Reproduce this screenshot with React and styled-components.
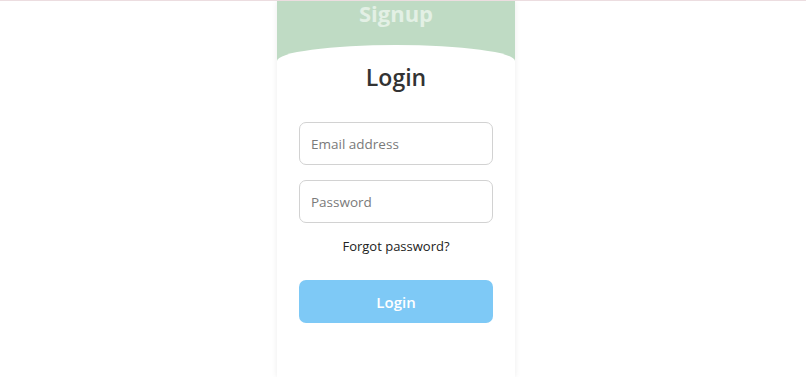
import React from 'react';
import styled, { createGlobalStyle } from 'styled-components';

const GlobalStyle = createGlobalStyle`
  html, body {
    margin: 0;
    padding: 0;
    height: 100%;
    background: #ffffff;
    font-family: "Open Sans", "Noto Sans", sans-serif;
  }
  #root {
    height: 100%;
  }
  * {
    box-sizing: border-box;
  }
`;

const Page = styled.div`
  height: 100vh;
  border-top: 1px solid #ecdde0;
  display: flex;
  justify-content: center;
  padding-right: 14px;
  overflow: hidden;
`;

const Card = styled.div`
  width: 238px;
  height: 100%;
  background-color: #bfdbc4;
  box-shadow: 0 0 6px rgba(0, 0, 0, 0.08);
  display: flex;
  flex-direction: column;
`;

const SignupHeader = styled.div`
  height: 44px;
  display: flex;
  justify-content: center;
  align-items: flex-start;
`;

const SignupTitle = styled.h2`
  margin: 0;
  font-size: 22px;
  font-weight: 700;
  color: #e3f0e5;
  line-height: 25px;
`;

const FormPanel = styled.form`
  flex: 1;
  background-color: #ffffff;
  border-radius: 50% 50% 0 0 / 16px 16px 0 0;
  padding: 17px 22px 0;
  display: flex;
  flex-direction: column;
`;

const Title = styled.h1`
  margin: 0 0 30px;
  text-align: center;
  font-size: 23px;
  font-weight: 600;
  line-height: 30px;
  color: #333333;
`;

const Input = styled.input`
  width: 100%;
  height: 43px;
  padding: 0 11px;
  margin-bottom: ${(props) => props.$gap}px;
  border: 1px solid #d2d2d2;
  border-radius: 7px;
  font-family: inherit;
  font-size: 13.5px;
  color: #333;
  outline: none;
  &::placeholder {
    color: #7a7a7a;
  }
`;

const ForgotLink = styled.a`
  display: block;
  text-align: center;
  font-size: 13px;
  font-weight: 500;
  line-height: 20px;
  color: #222222;
  text-decoration: none;
  margin-bottom: 24px;
`;

const SubmitButton = styled.button`
  width: 100%;
  height: 43px;
  border: none;
  border-radius: 7px;
  background-color: #7ec9f6;
  color: #ffffff;
  font-family: inherit;
  font-size: 15px;
  font-weight: 600;
  cursor: pointer;
`;

export default function App() {
  return (
    <>
      <GlobalStyle />
      <Page>
        <Card>
          <SignupHeader>
            <SignupTitle>Signup</SignupTitle>
          </SignupHeader>
          <FormPanel onSubmit={(e) => e.preventDefault()}>
            <Title>Login</Title>
            <Input type="email" placeholder="Email address" $gap={15} />
            <Input type="password" placeholder="Password" $gap={13} />
            <ForgotLink href="#">Forgot password?</ForgotLink>
            <SubmitButton type="submit">Login</SubmitButton>
          </FormPanel>
        </Card>
      </Page>
    </>
  );
}
